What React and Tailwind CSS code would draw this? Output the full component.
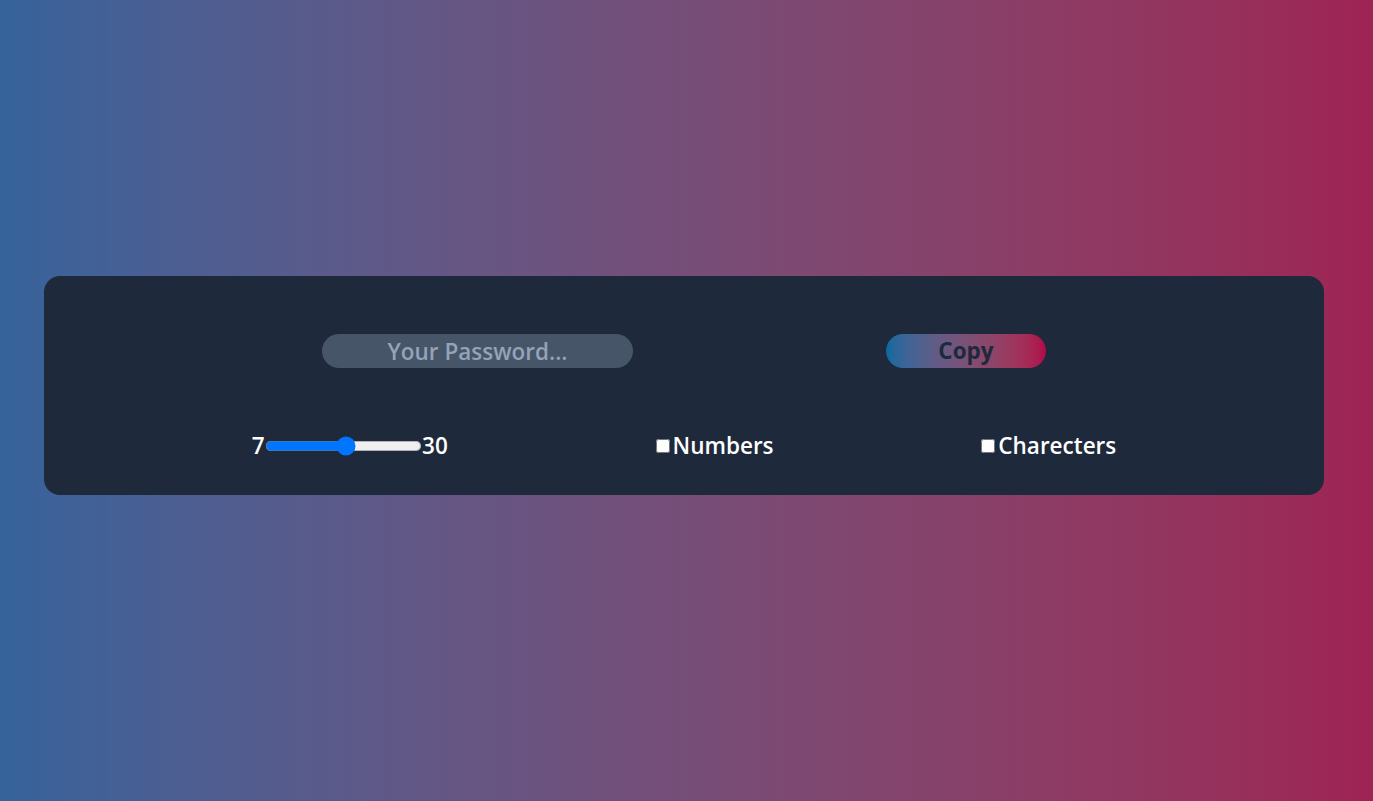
import React, { useState } from "react";

// Password generator card on a blue→crimson gradient
export default function App() {
  const [length, setLength] = useState(19);
  const [numbers, setNumbers] = useState(false);
  const [chars, setChars] = useState(false);

  return (
    <div
      className="min-h-screen w-full bg-gradient-to-r from-[#35639b] to-[#9e2354] pt-[276px]"
      style={{ fontFamily: '"Open Sans", "Noto Sans", sans-serif' }}
    >
      <div className="ml-[44px] h-[219px] w-[1280px] rounded-2xl bg-[#1e293b] pt-[58px]">
        {/* ── Row 1: output + copy ───────────────────────────── */}
        <div className="flex items-center pl-[278px]">
          <input
            type="text"
            readOnly
            placeholder="Your Password..."
            className="h-[34px] w-[311px] rounded-full bg-[#475569] text-center text-[22.5px] font-semibold text-slate-200 outline-none placeholder:text-[#94a3b8]"
          />
          <button className="ml-[253px] h-[34px] w-[160px] rounded-full bg-gradient-to-r from-[#0369a1] to-[#b0084a] text-[22.5px] font-bold text-[#1e293b]">
            Copy
          </button>
        </div>

        {/* ── Row 2: length + toggles ────────────────────────── */}
        <div className="mt-[61px] flex items-center justify-evenly text-[22.5px] font-semibold text-white">
          <div className="flex items-center">
            <span>7</span>
            <input
              type="range"
              min={7}
              max={30}
              value={length}
              onChange={(e) => setLength(Number(e.target.value))}
              className="m-0 w-[126px] [zoom:1.25]"
            />
            <span>30</span>
          </div>
          <label className="flex items-center">
            <input
              type="checkbox"
              checked={numbers}
              onChange={() => setNumbers(!numbers)}
              className="m-0 mr-[3px] h-[14px] w-[14px]"
            />
            Numbers
          </label>
          <label className="flex items-center">
            <input
              type="checkbox"
              checked={chars}
              onChange={() => setChars(!chars)}
              className="m-0 mr-[3px] h-[14px] w-[14px]"
            />
            Charecters
          </label>
        </div>
      </div>
    </div>
  );
}
